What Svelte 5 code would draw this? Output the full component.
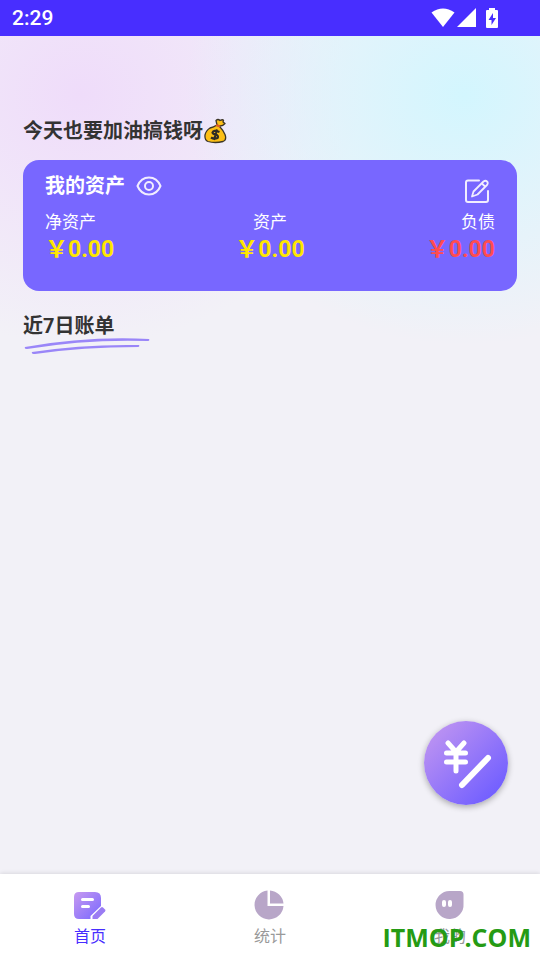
<script>
  const assets = [
    { label: '净资产', amount: '0.00' },
    { label: '资产', amount: '0.00' },
    { label: '负债', amount: '0.00', debt: true },
  ];

  let tab = $state('home');
  let visible = $state(true);
</script>

<div class="page">
  <header class="status">
    <time>2:29</time>
    <div class="status-icons">
      <svg width="24" height="20" viewBox="0 0 24 20">
        <path d="M0.5 4.5Q12-3.5 23.5 4.5L12 19Z" />
      </svg>
      <svg width="19" height="20" viewBox="0 0 19 20">
        <path d="M19 0V19H0Z" />
      </svg>
      <svg class="battery" width="12" height="20" viewBox="0 0 12 20">
        <path
          fill-rule="evenodd"
          d="M3 0H9V2H11Q12 2 12 3V19Q12 20 11 20H1Q0 20 0 19V3Q0 2 1 2H3ZM7 5L2.500 12H5.500V17L10 10H7Z"
        />
      </svg>
    </div>
  </header>

  <main>
    <h1>
      今天也要加油搞钱呀
      <svg width="24" height="26" viewBox="0 0 24 26" aria-hidden="true">
        <g stroke="#3b3526" stroke-width="1.300" stroke-linejoin="round">
          <path
            fill="#fcbf16"
            d="M14 7L13 2.500Q15 .5 17 2.500Q20 1 20.500 2.500L20 4L22 5.500Q20 8 17 8Z"
          />
          <path
            fill="#fcbf16"
            d="M13 7.500Q15 7 17 9Q20 12 22 16.500Q24 22 20 23.500Q12 25.500 5 23.500Q1.500 22 2 17Q3 12.500 7 10Q11 9 13 7.500Z"
          />
        </g>
        <path d="M13 7L17 8.500" stroke="#dc5d26" stroke-width="2" />
        <path
          fill="none"
          stroke="#2e2b24"
          stroke-width="2.200"
          d="M16.500 14Q10.500 11.500 9.500 14.500Q9.500 16 13 16.500Q16 18 14.500 20Q11 21.500 8 19.500M14 11.500L11 22"
        />
      </svg>
    </h1>

    <section class="card">
      <div class="card-head">
        <h2>我的资产</h2>
        <button
          class="icon"
          aria-label="显示金额"
          aria-pressed={visible}
          onclick={() => (visible = !visible)}
        >
          <svg width="26" height="20" viewBox="0 0 26 20">
            <path
              d="M1.500 10C4 4 8 1.500 13 1.500S22 4 24.500 10C22 16 18 18.500 13 18.500S4 16 1.500 10Z"
            />
            <circle cx="13" cy="10" r="4" />
          </svg>
        </button>
        <button class="icon edit" aria-label="编辑">
          <svg width="24" height="24" viewBox="0 0 24 24">
            <path d="M14 1.500H3Q1 1.500 1 3.500V21Q1 23 3 23H21Q23 23 23 21V12" />
            <path
              d="M7 17.500L8.500 12.500L18.500 2.500Q20.500 1 22 2.500T22 6L12.500 15.500ZM17 4.500L20 7.500"
              stroke-width="1.800"
            />
          </svg>
        </button>
      </div>
      <dl>
        {#each assets as item}
          <div class:debt={item.debt}>
            <dt>{item.label}</dt>
            <dd>￥{visible ? item.amount : '****'}</dd>
          </div>
        {/each}
      </dl>
    </section>

    <section class="bills">
      <h2>近7日账单</h2>
      <svg width="128" height="18" viewBox="0 0 128 18" aria-hidden="true">
        <path
          fill="#9a86f8"
          d="M2 9Q64-2 126 1Q127 3 125 3Q64 1 4 11Q1 11 2 9ZM9 14Q60 6 116 7Q117 9 115 9Q60 9 12 16Q8 16 9 14Z"
        />
      </svg>
    </section>
  </main>

  <nav>
    <button class:active={tab === 'home'} onclick={() => (tab = 'home')}>
      <svg width="34" height="30" viewBox="0 0 34 30">
        <defs>
          <linearGradient id="note" x1="0" y1="0" x2="1" y2="1">
            <stop offset="0" stop-color="#c79af0" />
            <stop offset="1" stop-color="#7867ff" />
          </linearGradient>
        </defs>
        <path
          fill="url(#note)"
          d="M6 2H22Q28 2 28 8V16L17.500 26V29H6Q1 29 1 24V7Q1 2 6 2Z"
        />
        <path
          fill="#9a7cf3"
          d="M19.500 29V26L28 17.500Q29 16.500 30 17.500L32 19.500Q33 20.500 32 21.500L24.500 29Z"
        />
        <path
          d="M9.500 9.500H19.500M9.500 16.500H15.500"
          stroke="#fff"
          stroke-width="3"
          stroke-linecap="round"
        />
      </svg>
      <span>首页</span>
    </button>
    <button class:active={tab === 'stats'} onclick={() => (tab = 'stats')}>
      <svg width="34" height="30" viewBox="0 0 34 30">
        <path
          fill="#b8a6c8"
          d="M14.500 .5V16H30.500A14.500 14.500 0 1 1 14.500 .5ZM17 .5A14.500 14.500 0 0 1 30.500 13.500H17Z"
        />
      </svg>
      <span>统计</span>
    </button>
    <button class:active={tab === 'mine'} onclick={() => (tab = 'mine')}>
      <svg width="34" height="30" viewBox="0 0 34 30">
        <path
          fill="#b8a6c8"
          d="M16.500 1H27Q30.500 1 30.500 4.500V14A14 14 0 1 1 16.500 1Z"
        />
        <path
          d="M11 12V15M17 12V15"
          stroke="#fff"
          stroke-width="4"
          stroke-linecap="round"
        />
      </svg>
      <span>我的</span>
    </button>
  </nav>

  <button class="fab" aria-label="记一笔">
    <svg width="84" height="84" viewBox="0 0 84 84">
      <g fill="none" stroke="#fff" stroke-linecap="round" stroke-width="5">
        <path d="M24 22L32 31L40 22M22.500 32H41.500M22.500 41H41.500M32 31V50" />
        <path d="M38 64L64 37" stroke-width="6" />
      </g>
    </svg>
  </button>
  <div class="watermark">ITMOP.COM</div>
</div>

<style>
  :global(body) {
    margin: 0;
  }

  .page {
    position: relative;
    display: flex;
    flex-direction: column;
    min-height: 100vh;
    font-family: Roboto, 'Noto Sans CJK SC', sans-serif;
    color: #333;
    background:
      radial-gradient(280px 250px at 86% 95px, #d3f6fe, #daf5fdc0 40%, #e8f1fa00),
      radial-gradient(280px 250px at 15% 95px, #efdcfa, #f0e0fac0 40%, #f1eaf900),
      #f2f1f7;
  }

  .status {
    display: flex;
    align-items: center;
    justify-content: space-between;
    height: 36px;
    padding: 0 42px 0 12px;
    box-sizing: border-box;
    font-size: 21px;
    font-weight: 500;
    color: #fff;
    background: #482eff;
  }

  .status-icons {
    display: flex;
    gap: 2px;
    fill: #fff;
  }

  .battery {
    margin-left: 8px;
  }

  main {
    flex: 1;
    padding: 80px 23px 0;
  }

  h1,
  h2 {
    margin: 0;
    font-size: 20px;
    font-weight: 700;
    line-height: 30px;
  }

  h1 {
    display: flex;
    align-items: center;
  }

  .card {
    margin-top: 14px;
    padding: 9px 22px 26px;
    border-radius: 16px;
    color: #fff;
    background: #7867ff;
  }

  .card-head {
    display: flex;
    align-items: center;
    gap: 11px;
  }

  button {
    padding: 0;
    border: none;
    background: none;
    font-family: inherit;
    cursor: pointer;
  }

  svg {
    display: block;
  }

  .icon svg {
    fill: none;
    stroke: #f1edff;
    stroke-width: 2;
    stroke-linejoin: round;
    stroke-linecap: round;
  }

  .edit {
    margin: 10px 6px 0 auto;
  }

  dl {
    display: flex;
    margin: 6px 0 0;
  }

  dl div {
    flex: 1;
    text-align: center;
  }

  dl div:first-child {
    text-align: left;
  }

  dl div:last-child {
    text-align: right;
  }

  dt {
    font-size: 17px;
    line-height: 26px;
  }

  dd {
    margin: 0;
    font-size: 23px;
    font-weight: 700;
    line-height: 30px;
    color: #ffe600;
  }

  .debt dd {
    color: #ff4c50;
  }

  .bills {
    margin-top: 23px;
  }

  .bills h2 {
    line-height: 24px;
  }

  nav {
    display: flex;
    height: 86px;
    background: #fff;
    box-shadow: 0 -1px 4px #0000001a;
  }

  nav button {
    display: flex;
    flex: 1;
    flex-direction: column;
    align-items: center;
    gap: 5px;
    padding-top: 16px;
    font-size: 16px;
    line-height: 24px;
    color: #999;
  }

  nav .active {
    color: #482eff;
  }

  .fab {
    position: absolute;
    right: 32px;
    bottom: 155px;
    border-radius: 50%;
    background: linear-gradient(135deg, #c79af0, #7360ff 85%);
    box-shadow: 0 2px 6px #00000050;
  }

  .watermark {
    position: absolute;
    right: 9px;
    bottom: 5px;
    font: 700 25px/36px 'Open Sans', sans-serif;
    color: #259b14;
    pointer-events: none;
  }
</style>
